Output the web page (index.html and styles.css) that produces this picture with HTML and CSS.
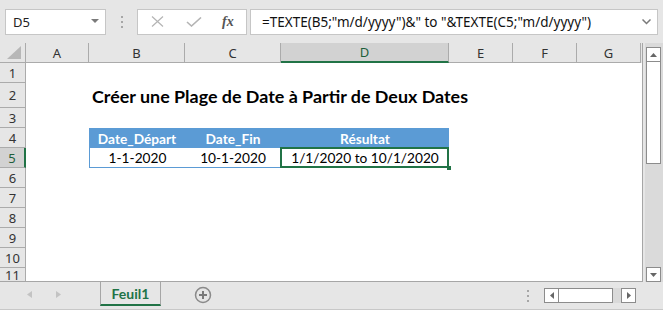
FILE: index.html
```html
<!DOCTYPE html>
<html lang="fr">
<head>
  <meta charset="UTF-8">
  <title>Feuil1</title>
  <link rel="stylesheet" href="styles.css">
</head>
<body>
  <div class="app">
    <div class="topbar">
      <div class="namebox">
        <span>D5</span>
        <svg class="drop" width="8" height="5" viewBox="0 0 8 5"><path d="M0 0h8L4 4z" fill="#7a7a7a"/></svg>
      </div>
      <div class="grip"><i></i><i></i><i></i></div>
      <div class="fxbtns">
        <svg width="13" height="11" viewBox="0 0 13 11"><path d="M1 0.5l11 10M12 0.5l-11 10" stroke="#b4b4b4" stroke-width="1.2" fill="none"/></svg>
        <svg width="16" height="10" viewBox="0 0 16 10"><path d="M1 5l4.5 4L15 0.5" stroke="#b4b4b4" stroke-width="1.6" fill="none"/></svg>
        <span class="fx">fx</span>
      </div>
      <div class="formula">
        <span>=TEXTE(B5;"m/d/yyyy")&amp;" to "&amp;TEXTE(C5;"m/d/yyyy")</span>
        <svg width="9" height="6" viewBox="0 0 9 6"><path d="M0.5 0.5l4 4 4-4" stroke="#7a7a7a" stroke-width="1.5" fill="none"/></svg>
      </div>
    </div>

    <div class="main">
      <div class="sheet">
        <div class="colheads">
          <div class="corner"><svg width="14" height="13" viewBox="0 0 14 13"><path d="M14 0v13H0z" fill="#b7b7b7"/></svg></div>
          <div class="ch w-a">A</div>
          <div class="ch w-b">B</div>
          <div class="ch w-c">C</div>
          <div class="ch w-d sel">D</div>
          <div class="ch w-e">E</div>
          <div class="ch w-f">F</div>
          <div class="ch w-g">G</div>
        </div>
        <div class="body">
          <div class="rowheads">
            <div class="rh">1</div>
            <div class="rh tall">2</div>
            <div class="rh">3</div>
            <div class="rh">4</div>
            <div class="rh sel">5</div>
            <div class="rh">6</div>
            <div class="rh">7</div>
            <div class="rh">8</div>
            <div class="rh">9</div>
            <div class="rh">10</div>
            <div class="rh cut">11</div>
          </div>
          <div class="cells">
            <div class="title">Créer une Plage de Date à Partir de Deux Dates</div>
            <div class="th col-b">Date_Départ</div>
            <div class="th col-c">Date_Fin</div>
            <div class="th col-d">Résultat</div>
            <div class="td col-b first">1-1-2020</div>
            <div class="td col-c">10-1-2020</div>
            <div class="td col-d active">1/1/2020 to 10/1/2020<span class="handle"></span></div>
          </div>
        </div>
      </div>
      <div class="vscroll">
        <div class="sbtn"><svg width="7" height="4" viewBox="0 0 7 4"><path d="M0 4h7L3.5 0z" fill="#666"/></svg></div>
        <div class="vthumb"></div>
        <div class="spacer"></div>
        <div class="sbtn"><svg width="7" height="4" viewBox="0 0 7 4"><path d="M0 0h7L3.5 4z" fill="#666"/></svg></div>
      </div>
    </div>

    <div class="tabbar">
      <div class="nav">
        <svg width="5" height="7" viewBox="0 0 5 7"><path d="M5 0v7L0 3.5z" fill="#c3c3c3"/></svg>
        <svg width="5" height="7" viewBox="0 0 5 7"><path d="M0 0v7l5-3.5z" fill="#c3c3c3"/></svg>
      </div>
      <div class="tab">Feuil1</div>
      <svg class="add" width="18" height="18" viewBox="0 0 18 18">
        <circle cx="9" cy="9" r="7.5" stroke="#8a8a8a" stroke-width="1.5" fill="none"/>
        <path d="M9 5v8M5 9h8" stroke="#7a7a7a" stroke-width="2"/>
      </svg>
      <div class="hgrip"><i></i><i></i><i></i></div>
      <div class="hscroll">
        <div class="sbtn"><svg width="4" height="7" viewBox="0 0 4 7"><path d="M4 0v7L0 3.5z" fill="#666"/></svg></div>
        <div class="hthumb"></div>
        <div class="htrack"></div>
        <div class="sbtn"><svg width="4" height="7" viewBox="0 0 4 7"><path d="M0 0v7l4-3.5z" fill="#666"/></svg></div>
      </div>
    </div>
  </div>
</body>
</html>
```

FILE: styles.css
```css
body {
  margin: 0;
  background-color: #e6e6e6;
  font-family: "Noto Sans", Arial, sans-serif;
}
.app {
  width: 663px;
  height: 310px;
  overflow: hidden;
}

/* formula bar */
.topbar {
  height: 43px;
  display: flex;
  align-items: center;
  padding-left: 5px;
  box-sizing: border-box;
}
.namebox {
  width: 101px;
  height: 26px;
  background-color: #fff;
  border: 1px solid #c6c6c6;
  box-sizing: border-box;
  display: flex;
  align-items: center;
  justify-content: space-between;
  padding: 0 6px 0 7px;
  font-size: 13px;
  color: #222;
}
.grip {
  display: flex;
  flex-direction: column;
  gap: 3px;
  margin: 0 14px 0 15px;
}
.grip i, .hgrip i {
  display: block;
  width: 2px;
  height: 2px;
  background-color: #a6a6a6;
}
.fxbtns {
  width: 110px;
  height: 26px;
  background-color: #fff;
  border: 1px solid #c6c6c6;
  box-sizing: border-box;
  display: flex;
  align-items: center;
  padding-left: 13px;
  gap: 22px;
}
.fx {
  font-family: "Liberation Serif", serif;
  font-style: italic;
  font-weight: bold;
  font-size: 14px;
  color: #555;
  margin-left: -2px;
}
.formula {
  width: 408px;
  height: 26px;
  margin-left: 3px;
  background-color: #fff;
  border: 1px solid #c6c6c6;
  box-sizing: border-box;
  display: flex;
  align-items: center;
  justify-content: space-between;
  padding: 0 6px 0 11px;
  font-size: 13.5px;
  color: #111;
  white-space: nowrap;
}

/* sheet */
.main {
  display: flex;
  height: 239px;
}
.sheet {
  width: 643px;
  background-color: #fff;
  border-right: 1px solid #a6a6a6;
  border-bottom: 1px solid #a6a6a6;
  box-sizing: border-box;
  overflow: hidden;
}
.colheads {
  display: flex;
  height: 20px;
  background-color: #e6e6e6;
}
.corner, .ch {
  height: 20px;
  box-sizing: border-box;
  border-right: 1px solid #ababab;
  border-bottom: 1px solid #ababab;
}
.corner {
  width: 26px;
  display: flex;
  align-items: flex-end;
  justify-content: flex-end;
  padding: 0 4px 3px 0;
}
.ch {
  display: flex;
  align-items: center;
  justify-content: center;
  font-size: 13px;
  color: #333;
}
.ch.sel {
  background-color: #d2d2d2;
  border-bottom: 2px solid #217346;
  color: #1e5e3a;
}
.w-a { width: 63px; }
.w-b { width: 96px; }
.w-c { width: 96px; }
.w-d { width: 168px; }
.w-e { width: 64px; }
.w-f { width: 64px; }
.w-g { width: 64px; }

.body {
  display: flex;
}
.rowheads {
  width: 26px;
  flex-shrink: 0;
  background-color: #e6e6e6;
}
.rh {
  height: 20px;
  box-sizing: border-box;
  border-right: 1px solid #ababab;
  border-bottom: 1px solid #ababab;
  display: flex;
  align-items: center;
  justify-content: center;
  font-size: 13px;
  color: #333;
}
.rh.tall { height: 25px; }
.rh.sel {
  background-color: #d2d2d2;
  border-right: 2px solid #217346;
  color: #1e5e3a;
}
.rh.cut {
  height: 13px;
  align-items: flex-start;
  line-height: 15px;
  border-bottom: none;
}

.cells {
  display: grid;
  grid-template-columns: 63px 96px 96px 168px 64px 64px 64px;
  grid-template-rows: 20px 25px 20px 20px 20px;
  font-family: Lato, "Liberation Sans", sans-serif;
  font-size: 13.7px;
  color: #000;
}
.title {
  grid-row: 2;
  grid-column: 2 / 7;
  align-self: center;
  padding-left: 3px;
  font-weight: bold;
  font-size: 17.9px;
  white-space: nowrap;
}
.th, .td {
  display: flex;
  align-items: center;
  justify-content: center;
  white-space: nowrap;
  box-sizing: border-box;
}
.th {
  grid-row: 4;
  background-color: #5b9bd5;
  color: #fff;
  font-weight: bold;
}
.td {
  grid-row: 5;
  border-bottom: 1px solid #5b9bd5;
}
.td.first { border-left: 1px solid #5b9bd5; }
.col-b { grid-column: 2; }
.col-c { grid-column: 3; }
.col-d { grid-column: 4; }

.active {
  position: relative;
}
.active::after {
  content: "";
  position: absolute;
  left: -1px;
  top: -1px;
  right: 0;
  bottom: -1px;
  border: 2px solid #217346;
}
.handle {
  position: absolute;
  right: -2px;
  bottom: -3px;
  width: 4px;
  height: 4px;
  background-color: #217346;
  z-index: 1;
}

/* scrollbars */
.vscroll {
  width: 20px;
  display: flex;
  flex-direction: column;
  align-items: flex-end;
  padding: 4px 2px 0 0;
  box-sizing: border-box;
  background: linear-gradient(to right, #e6e6e6 2px, #dadada 2px);
}
.sbtn {
  width: 15px;
  height: 15px;
  background-color: #fff;
  border: 1px solid #8c8c8c;
  box-sizing: border-box;
  display: flex;
  align-items: center;
  justify-content: center;
  flex-shrink: 0;
}
.vthumb {
  width: 15px;
  height: 102px;
  background-color: #fff;
  border: 1px solid #8c8c8c;
  border-top: none;
  box-sizing: border-box;
}
.spacer { flex: 1; }

.tabbar {
  height: 27px;
  border-bottom: 1px solid #c8c8c8;
  display: flex;
  align-items: flex-start;
}
.nav {
  width: 100px;
  height: 24px;
  display: flex;
  align-items: center;
  padding-left: 27px;
  gap: 24px;
  box-sizing: border-box;
}
.tab {
  width: 61px;
  height: 24px;
  box-sizing: border-box;
  border-left: 1px solid #a6a6a6;
  border-right: 1px solid #a6a6a6;
  border-bottom: 2px solid #217346;
  display: flex;
  align-items: center;
  justify-content: center;
  font-family: Lato, "Liberation Sans", sans-serif;
  font-weight: bold;
  font-size: 14px;
  color: #217346;
}
.add {
  margin: 4px 0 0 33px;
}
.hgrip {
  display: flex;
  flex-direction: column;
  gap: 3px;
  margin: 8px 0 0 315px;
}
.hscroll {
  display: flex;
  margin: 6px 0 0 15px;
  background-color: #dadada;
}
.hthumb {
  width: 54px;
  height: 15px;
  background-color: #fff;
  border: 1px solid #8c8c8c;
  border-left: none;
  box-sizing: border-box;
}
.htrack { width: 8px; }
```
